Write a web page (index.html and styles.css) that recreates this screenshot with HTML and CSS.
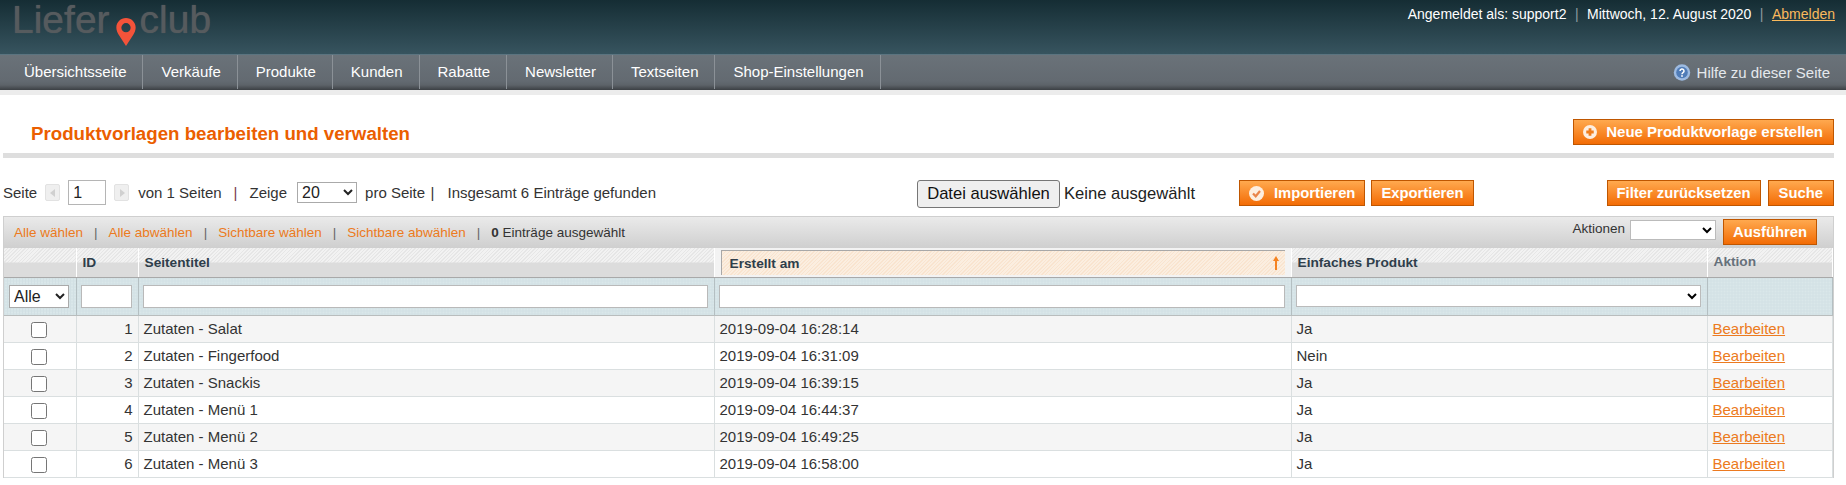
FILE: index.html
```html
<!DOCTYPE html>
<html lang="de">
<head>
<meta charset="utf-8">
<title>Produktvorlagen</title>
<link rel="stylesheet" href="styles.css">
</head>
<body>
<header class="top">
  <div class="logo"><span>Liefer</span><svg class="pin" width="20" height="28" viewBox="0 0 20 29"><path fill="#f4533a" fill-rule="evenodd" d="M10 0C4.500 0 0 4.300 0 9.800c0 3 1.100 5.200 2.600 7.700L10 29l7.400-11.500c1.500-2.500 2.600-4.700 2.600-7.700C20 4.300 15.500 0 10 0zm0 5.200a4.800 4.800 0 1 1 0 9.600 4.800 4.800 0 0 1 0-9.600z"/></svg><span>club</span></div>
  <div class="userbar">
    <span>Angemeldet als: support2</span><i>|</i><span>Mittwoch, 12. August 2020</span><i>|</i><a href="#">Abmelden</a>
  </div>
</header>
<nav class="nav">
  <ul class="menu">
    <li>Übersichtsseite</li><li>Verkäufe</li><li>Produkte</li><li>Kunden</li><li>Rabatte</li><li>Newsletter</li><li>Textseiten</li><li>Shop-Einstellungen</li>
  </ul>
  <div class="help">
    <svg width="18" height="17" viewBox="0 0 17 17"><circle cx="8.500" cy="8.500" r="8.200" fill="#9dbbe2"/><circle cx="8.500" cy="8.500" r="5.800" fill="#4f7cb8"/><path d="M6.500 7a2 2 0 1 1 3 1.700c-.7.400-1 .8-1 1.500" fill="none" stroke="#fff" stroke-width="1.500"/><rect x="7.700" y="11.200" width="1.600" height="1.600" fill="#fff"/></svg>
    <span>Hilfe zu dieser Seite</span>
  </div>
</nav>
<div class="band"></div>
<main class="content">
  <div class="head">
    <h1>Produktvorlagen bearbeiten und verwalten</h1>
    <button class="btn btn-new"><svg width="14" height="14" viewBox="0 0 15 15"><circle cx="7.500" cy="7.500" r="7.500" fill="#fdeee0"/><path d="M7.500 3.500v8M3.500 7.500h8" stroke="#f07d1c" stroke-width="3"/></svg>Neue Produktvorlage erstellen</button>
  </div>
  <div class="tools">
    <div class="pager">
      <span>Seite</span>
      <span class="arrow"><svg width="6" height="8" viewBox="0 0 6 8"><path d="M5 0v8L0 4z" fill="#d0d0d0"/></svg></span>
      <input class="page-input" type="text" value="1">
      <span class="arrow"><svg width="6" height="8" viewBox="0 0 6 8"><path d="M1 0v8l5-4z" fill="#d0d0d0"/></svg></span>
      <span>von 1 Seiten</span><span class="sep">|</span><span>Zeige</span>
      <select class="per-page"><option>20</option></select>
      <span>pro Seite</span><span class="sep2">|</span><span>Insgesamt 6 Einträge gefunden</span>
    </div>
    <div class="upload">
      <button class="file-btn">Datei auswählen</button><span class="file-name">Keine ausgewählt</span>
    </div>
    <div class="io">
      <button class="btn btn-imp"><svg width="15" height="15" viewBox="0 0 15 15"><circle cx="7.500" cy="7.500" r="7.500" fill="#fdeee0"/><path d="M4 7.500l2.700 2.800L11 5" fill="none" stroke="#e9844a" stroke-width="2.200"/></svg>Importieren</button>
      <button class="btn">Exportieren</button>
    </div>
    <div class="search">
      <button class="btn">Filter zurücksetzen</button>
      <button class="btn btn-search">Suche</button>
    </div>
  </div>
  <div class="grid">
    <div class="mass">
      <div class="mass-links">
        <a href="#">Alle wählen</a><i>|</i><a href="#">Alle abwählen</a><i>|</i><a href="#">Sichtbare wählen</a><i>|</i><a href="#">Sichtbare abwählen</a><i>|</i><span><b>0</b> Einträge ausgewählt</span>
      </div>
      <div class="mass-act">
        <span>Aktionen</span>
        <select class="act-select"><option></option></select>
        <button class="btn">Ausführen</button>
      </div>
    </div>
    <table class="data">
      <colgroup><col class="c1"><col class="c2"><col class="c3"><col class="c4"><col class="c5"><col class="c6"></colgroup>
      <thead>
        <tr class="heads">
          <th></th><th>ID</th><th>Seitentitel</th>
          <th class="active"><div class="sorted"><span>Erstellt am</span><svg width="6" height="14" viewBox="0 0 6 14"><path d="M3 0l3 5H4v9H2V5H0z" fill="#f58220"/></svg></div></th>
          <th>Einfaches Produkt</th><th class="off">Aktion</th>
        </tr>
        <tr class="filters">
          <th class="f-first"><select class="f-all"><option>Alle</option></select></th>
          <th><input class="f-in" type="text"></th>
          <th><input class="f-in" type="text"></th>
          <th><input class="f-in" type="text"></th>
          <th><select class="f-sel"><option></option></select></th>
          <th></th>
        </tr>
      </thead>
      <tbody>
        <tr><td class="ck"><input type="checkbox"></td><td class="num">1</td><td>Zutaten - Salat</td><td>2019-09-04 16:28:14</td><td>Ja</td><td><a href="#">Bearbeiten</a></td></tr>
        <tr><td class="ck"><input type="checkbox"></td><td class="num">2</td><td>Zutaten - Fingerfood</td><td>2019-09-04 16:31:09</td><td>Nein</td><td><a href="#">Bearbeiten</a></td></tr>
        <tr><td class="ck"><input type="checkbox"></td><td class="num">3</td><td>Zutaten - Snackis</td><td>2019-09-04 16:39:15</td><td>Ja</td><td><a href="#">Bearbeiten</a></td></tr>
        <tr><td class="ck"><input type="checkbox"></td><td class="num">4</td><td>Zutaten - Menü 1</td><td>2019-09-04 16:44:37</td><td>Ja</td><td><a href="#">Bearbeiten</a></td></tr>
        <tr><td class="ck"><input type="checkbox"></td><td class="num">5</td><td>Zutaten - Menü 2</td><td>2019-09-04 16:49:25</td><td>Ja</td><td><a href="#">Bearbeiten</a></td></tr>
        <tr><td class="ck"><input type="checkbox"></td><td class="num">6</td><td>Zutaten - Menü 3</td><td>2019-09-04 16:58:00</td><td>Ja</td><td><a href="#">Bearbeiten</a></td></tr>
      </tbody>
    </table>
  </div>
</main>
</body>
</html>
```
FILE: styles.css
```css
* { box-sizing: border-box; }
html, body { margin: 0; padding: 0; }
body { background: #fff; font: 15px "Liberation Sans", Arial, sans-serif; color: #333; height: 485px; overflow: hidden; }
a { color: #ec7a20; }

.top { height: 55px; display: flex; justify-content: space-between; background: linear-gradient(#152d34, #37545f); border-bottom: 1px solid #5b7480; color: #fff; }
.logo { display: flex; align-items: flex-start; padding: 0 0 0 12px; height: 54px; font: 39px/40px "Liberation Sans", sans-serif; color: #565b5e; text-shadow: 0 0 1px #565b5e; }
.pin { margin: 18px 4px 0 6px; flex: none; }
.userbar { display: flex; padding: 5px 11px 0 0; height: 24px; font-size: 14px; line-height: 18px; }
.userbar i { font-style: normal; color: #8e9ba0; margin: 0 8.500px; }
.userbar a { color: #f9b95c; }

.nav { height: 35px; display: flex; justify-content: space-between; background: linear-gradient(#6a7279 0, #636a71 26px, #5d6369 30px, #3c4044 100%); color: #fff; }
.menu { display: flex; list-style: none; margin: 0; padding: 0; height: 34px; }
.menu li { padding: 0 16px 0 18px; line-height: 34px; border-right: 1px solid #8b9197; }
.menu li:first-child { padding: 0 15px 0 24px; }
.menu li:nth-child(2) { padding-left: 19px; }
.help { display: flex; align-items: center; gap: 6px; padding: 0 16px 1px 0; color: #e4e8ec; }

.band { height: 5px; background: #ececec; }

.content { padding: 0 12px 0 3px; }
.head { display: flex; justify-content: space-between; align-items: flex-start; height: 63px; padding-top: 24px; border-bottom: 5px solid #dedede; }
h1 { margin: 0; padding: 1px 0 0 28px; font-size: 18.700px; line-height: 28px; font-weight: bold; color: #eb5e00; }

.btn { height: 26px; padding: 0 9px; border: 1px solid #bf5600; background: linear-gradient(#ffa94f, #f36c05); color: #fff; font: bold 14.800px/22px "Liberation Sans", Arial, sans-serif; display: inline-flex; align-items: center; white-space: nowrap; cursor: pointer; }
.btn svg { flex: none; margin-right: 10px; }
.btn-search { padding: 0 10px; }
.btn-new { padding: 0 10px 0 9px; font-size: 15px; }
.btn-new svg { margin-right: 9px; }

.tools { display: flex; align-items: flex-start; height: 58px; padding-top: 22px; }
.pager { display: flex; align-items: center; height: 25px; width: 914px; white-space: nowrap; }
.arrow { width: 15px; height: 17px; margin-left: 8px; background: #efefef; border: 1px solid #e2e2e2; border-radius: 2px; display: inline-flex; align-items: center; justify-content: center; }
.page-input { width: 38px; height: 25px; margin-left: 8px; padding: 4px; border: 1px solid #b5b5b5; font: 16px "Liberation Sans", sans-serif; color: #222; }
.pager .arrow + span { margin-left: 9px; }
.sep { margin: 0 12px; color: #7a3b4c; }
.sep2 { margin: 0 13px 0 5.500px; }
.per-page { width: 60px; height: 21px; margin: 0 8px 0 10px; font: 16px "Liberation Sans", sans-serif; color: #222; background: #fff; border: 1px solid #aaa; }
.upload { display: flex; align-items: flex-start; width: 322px; }
.file-btn { height: 28px; width: 143px; padding: 0; font: 16.600px "Liberation Sans", sans-serif; color: #111; background: #efefef; border: 1px solid #767676; border-radius: 3px; }
.file-name { margin-left: 4px; font-size: 16.600px; line-height: 28px; color: #222; }
.io { display: flex; gap: 6px; flex: 1; }
.search { display: flex; gap: 7px; }

.grid { border: 1px solid #cfcfcf; border-bottom: 0; }
.mass { height: 31px; display: flex; justify-content: space-between; align-items: flex-start; background: linear-gradient(#eaeaea, #cfcfcf); }
.mass-links { padding: 7px 0 0 10px; font-size: 13.500px; line-height: 18px; white-space: nowrap; }
.mass-links a { text-decoration: none; }
.mass-links i { font-style: normal; margin: 0 11px; color: #666; }
.mass-act { display: flex; align-items: flex-start; padding: 2px 16px 0 0; font-size: 13.500px; }
.mass-act span { margin-top: 2px; }
.act-select { width: 86px; height: 20px; margin: 1px 7px 0 5px; background: #fff; border: 1px solid #bbb; font: 14px "Liberation Sans", sans-serif; }

.data { width: 100%; border-collapse: collapse; table-layout: fixed; }
.c1 { width: 72px; } .c2 { width: 62px; } .c3 { width: 576px; } .c4 { width: 577px; } .c5 { width: 416px; }

.heads th { height: 29px; padding: 0 6px; text-align: left; font-size: 13.700px; color: #2f3e4b; border-right: 1px solid #fff; border-bottom: 1px solid #a9a9a9; vertical-align: middle; background: repeating-linear-gradient(135deg, #e6e6e6 0 1px, #f2f2f2 1px 2.500px) top / 100% 50% no-repeat, #dcdcdc; }
.heads th.off { color: #66707a; padding-bottom: 2px; }
.heads th.active { padding: 2px 6px 1px 6px; background: #f3f3f3; }
.sorted { height: 25px; display: flex; justify-content: space-between; align-items: center; padding: 0 6px 0 8px; border: 1px solid #a8a8a8; border-width: 1px 0 0 1px; background: repeating-linear-gradient(135deg, #f9e4cf 0 1px, #fbeee0 1px 2.500px); }

.filters th { height: 38px; padding: 0 6px 0 4px; text-align: left; border-right: 1px solid #b4bfc2; border-bottom: 1px solid #b9bdbd; background: linear-gradient(90deg, #d2e0e4 1px, transparent 1px) 0 0 / 3px 3px, linear-gradient(#d2e0e4 1px, transparent 1px) 0 0 / 3px 3px, #dae7ea; }
.filters .f-first { padding-left: 5px; }
.f-in { display: block; width: 100%; height: 23px; border: 1px solid #b9b9b9; background: #fff; }
.f-all { display: block; width: 60px; height: 23px; font: 16px "Liberation Sans", sans-serif; background: #fff; border: 1px solid #aaa; color: #222; }
.f-sel { display: block; width: 100%; height: 22px; background: #fff; border: 1px solid #bbb; }

tbody td { height: 27px; padding: 0 5px; border-right: 1px solid #dadfe0; border-bottom: 1px solid #dadfe0; white-space: nowrap; }
tbody tr:nth-child(odd) td { background: #f5f5f5; }
tbody .ck { text-align: center; padding: 0 7px 0 5px; }
.ck input { width: 16px; height: 16px; margin: 2px 0 0; vertical-align: middle; }
.num { text-align: right; }
```
